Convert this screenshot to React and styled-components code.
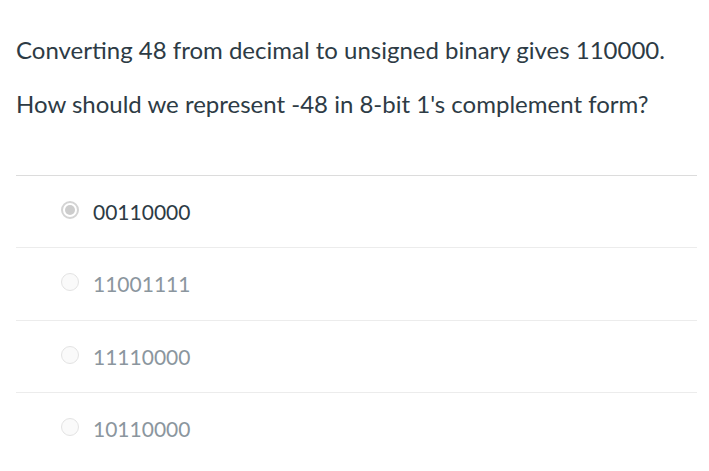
import React from "react";
import styled, { createGlobalStyle } from "styled-components";

const GlobalStyle = createGlobalStyle`
  body {
    margin: 0;
    background: #fff;
    font-family: Lato, "Liberation Sans", sans-serif;
    color: #2d3b45;
  }
`;

const Container = styled.div`
  padding: 0 12px 0 16px;
`;

const Question = styled.div`
  padding-top: 32px;
  padding-bottom: 53px;
`;

const Para = styled.p`
  margin: 0 0 18px;
  font-size: 24px;
  line-height: 36px;
  &:last-child {
    margin-bottom: 0;
  }
`;

const Answers = styled.div`
  border-top: 1px solid #dcdcdc;
`;

const Answer = styled.label`
  display: flex;
  align-items: center;
  height: 71.3px;
  padding-left: 45px;
  border-bottom: 1px solid #ececec;
  font-size: 21px;
  color: ${({ $selected }) => ($selected ? "#2d3b45" : "#8b969e")};

  &:last-child {
    border-bottom: 0;
  }
`;

const Radio = styled.span`
  width: 18px;
  height: 18px;
  box-sizing: border-box;
  border-radius: 50%;
  border: ${({ $selected }) => ($selected ? "2px solid #d4d4d4" : "1px solid #e3e3e3")};
  margin: -3px 14px 0 0;
  display: flex;
  align-items: center;
  justify-content: center;
  background: ${({ $selected }) => ($selected ? "#fff" : "#fafafa")};

  &::after {
    content: "";
    width: 10px;
    height: 10px;
    border-radius: 50%;
    background: ${({ $selected }) => ($selected ? "#cdcdcd" : "transparent")};
  }
`;

const options = ["00110000", "11001111", "11110000", "10110000"];

export default function App() {
  return (
    <Container>
      <GlobalStyle />
      <Question>
        <Para>Converting 48 from decimal to unsigned binary gives 110000.</Para>
        <Para>How should we represent -48 in 8-bit 1's complement form?</Para>
      </Question>
      <Answers>
        {options.map((opt, i) => (
          <Answer key={opt} $selected={i === 0}>
            <Radio $selected={i === 0} />
            {opt}
          </Answer>
        ))}
      </Answers>
    </Container>
  );
}
